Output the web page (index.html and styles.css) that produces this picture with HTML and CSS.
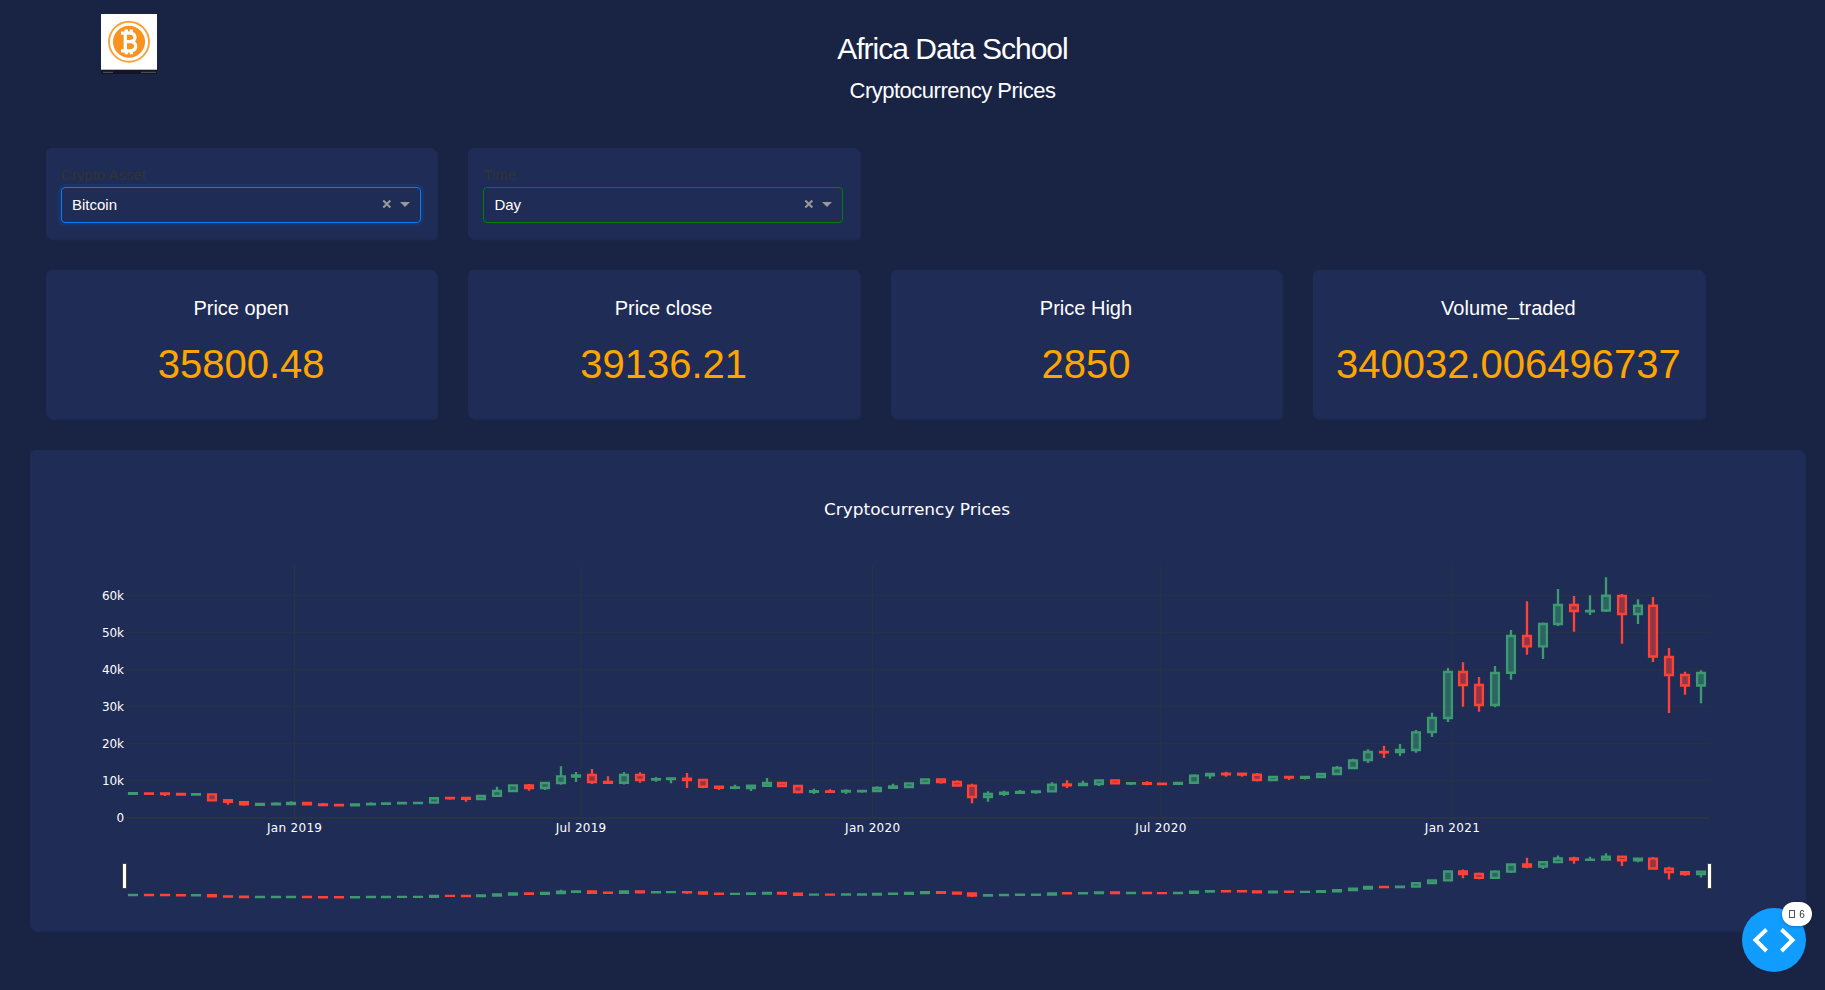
FILE: index.html
```html
<!DOCTYPE html>
<html lang="en">
<head>
<meta charset="utf-8">
<title>Cryptocurrency Prices</title>
<link rel="stylesheet" href="styles.css">
</head>
<body>
<header class="header">
  <svg class="logo" width="56" height="60" viewBox="0 0 56 60">
    <rect width="56" height="56" fill="#fff"/>
    <rect y="55" width="56" height="1" fill="#bbb"/>
    <rect y="56" width="56" height="4" fill="#12142a"/>
    <path d="M2 58.3h10M40 58.3h15" stroke="#5d5a5c" stroke-width="1"/>
    <circle cx="28" cy="27.7" r="20" fill="none" stroke="#f9a13a" stroke-width="1.9"/>
    <circle cx="28" cy="27.7" r="16" fill="#f7931e"/>
    <path d="M20 19.200h8.500c7 0 7 7.600 1.500 8.300c6.500 .8 6.500 9.400-1.500 9.400H20M24.300 19.200v17.700M24 27.700h6M25.300 15.500v4M30.300 15.500v4M25.300 36v4.300M30.300 36v4.300" fill="none" stroke="#fff" stroke-width="3.300"/>
  </svg>
  <div class="titles">
    <h3 class="title">Africa Data School</h3>
    <h5 class="subtitle">Cryptocurrency Prices</h5>
  </div>
</header>
<main>
  <section class="row">
    <div class="card filter">
      <label class="label">Crypto Asset</label>
      <div class="select focused"><span class="value">Bitcoin</span>
        <svg class="controls" width="28" height="10" viewBox="0 0 28 10"><path d="M1.300 1.500l7 7M8.300 1.500l-7 7" stroke="#999" stroke-width="2"/><path d="M18 3h10l-5 5z" fill="#999"/></svg>
      </div>
    </div>
    <div class="card filter">
      <label class="label">Time</label>
      <div class="select"><span class="value">Day</span>
        <svg class="controls" width="28" height="10" viewBox="0 0 28 10"><path d="M1.300 1.500l7 7M8.300 1.500l-7 7" stroke="#999" stroke-width="2"/><path d="M18 3h10l-5 5z" fill="#999"/></svg>
      </div>
    </div>
  </section>
  <section class="row stats">
    <div class="card stat"><h6 class="stat-name">Price open</h6><p class="stat-value">35800.48</p></div>
    <div class="card stat"><h6 class="stat-name">Price close</h6><p class="stat-value">39136.21</p></div>
    <div class="card stat"><h6 class="stat-name">Price High</h6><p class="stat-value">2850</p></div>
    <div class="card stat"><h6 class="stat-name">Volume_traded</h6><p class="stat-value">340032.006496737</p></div>
  </section>
  <section class="card chart-card">
    <svg id="chart" class="chart" width="1774" height="480" viewBox="30 450 1774 480"></svg>
  </section>
</main>
<div class="debug">
  <svg class="debug-icon" width="64" height="64" viewBox="0 0 64 64"><circle cx="32" cy="32" r="32" fill="#119dff"/><path d="M24.500 21.500L13.500 32l11 11M39.500 21.500L50.500 32l-11 11" fill="none" stroke="#fff" stroke-width="4"/></svg>
  <div class="badge"><i class="tofu"></i><span>6</span></div>
</div>
<script src="chart.js"></script>
</body>
</html>
```
FILE: styles.css
```css
* { box-sizing: border-box; }
body {
  margin: 0;
  height: 990px;
  overflow: hidden;
  background: #192444;
  color: #fff;
  font-family: "Liberation Sans", Arial, sans-serif;
  font-size: 15px;
}
h3, h5, h6, p { margin: 0; font-weight: 400; }
.header { display: flex; height: 148px; padding: 14px 0 0 101px; }
.logo { flex: none; }
.titles { width: 1591px; text-align: center; padding-top: 17px; }
.title { font-size: 30px; line-height: 36px; letter-spacing: -1px; }
.subtitle { font-size: 22px; line-height: 33px; letter-spacing: -.5px; margin-top: 7px; }
.row { display: flex; gap: 32px; padding-left: 46px; }
.card {
  background: #1f2c56;
  border-radius: 5px;
  box-shadow: 2px 2px 2px #1f2c56;
}
.filter { width: 390.400px; height: 90px; padding: 16px 15.400px 0 15px; }
.label { display: block; color: #333; line-height: 22px; height: 23px; }
.select {
  display: flex;
  align-items: center;
  justify-content: space-between;
  height: 36px;
  padding: 0 10px 2px;
  border: 1px solid green;
  border-radius: 4px;
}
.focused { border-color: #007eff; box-shadow: 0 0 0 3px rgba(0, 126, 255, .1); }
.stats { margin-top: 32px; }
.stat { width: 390.400px; height: 148px; padding-top: 23px; text-align: center; }
.stat-name { font-size: 20px; line-height: 30px; }
.stat-value { font-size: 40px; line-height: 60px; margin-top: 11px; color: orange; white-space: nowrap; }
.chart-card { margin: 32px 0 0 30px; width: 1774px; height: 480px; }
.chart { display: block; }
.chart text { font-family: "DejaVu Sans", Verdana, sans-serif; font-size: 12px; fill: #fff; }
.chart .chart-title { font-size: 16.500px; }
.grid { stroke: #283442; stroke-width: 1; }
.zero { stroke: #283442; stroke-width: 2; }
.up { stroke: #3d9970; fill: rgba(61, 153, 112, .5); stroke-width: 2.350; }
.down { stroke: #ff4136; fill: rgba(255, 65, 54, .5); stroke-width: 2.350; }
.handle { fill: #fff; stroke: #444; stroke-width: 1; }
.debug { position: fixed; left: 1742px; top: 908px; width: 64px; height: 64px; }
.debug-icon { display: block; }
.badge {
  position: absolute;
  left: 40px;
  top: -6px;
  width: 30px;
  height: 24px;
  border-radius: 12px;
  background: #fff;
  box-shadow: 0 1px 3px rgba(0, 0, 0, .25);
  color: #333;
  display: flex;
  align-items: center;
  justify-content: center;
  gap: 4px;
  font-size: 10px;
}
.tofu { width: 6px; height: 8px; border: 1px solid #555; }
```
FILE: chart.js
```js
// One row per ten-day candle: direction, high, body top, body bottom, low (chart units).
const candles = `
g 793 793.2 793.8 794
r 793 793.3 793.9 794
r 792.6 793.5 794.1 796
r 793.5 793.9 794.6 795
g 794 794.2 794.6 795
r 794 794.3 800.3 801
r 800 800.2 801.9 804.8
r 802 802.2 804.3 805.7
g 803.5 804 804.7 806
g 802.2 803.7 804.2 804.6
g 801.2 802.9 804 804.5
r 802.6 803 804.2 804.6
r 803 804.3 805.1 805.5
r 804.6 805 805.4 806
g 804.2 804.5 805.4 806
g 802.2 803.8 804.4 804.8
g 803 803.4 803.9 804.4
g 802.6 803 803.3 803.7
g 802.4 802.8 803 803.4
g 797.4 798.2 802.6 803
r 797.6 798 798.3 799.7
r 797 798 798.9 801.8
g 795.5 796 799 799.6
g 786.7 791 795.8 796
g 784.6 785.3 791 791.5
r 784 785.5 788 790.7
g 782.4 783 788 790
g 766.3 776.4 783 784.8
g 772 775.5 776.5 782
r 769 775 782 784
r 776.3 782 782.8 783.4
g 772 775 782.7 784.5
r 772.3 775 780 782.7
g 777 779.2 779.6 781.7
g 777.3 778.5 779 783.3
r 773 778.6 780 788
r 779.5 780 786.7 788.3
r 786 786.6 787.7 790
g 784.7 787.3 787.7 789.3
g 785 785.6 788 791
g 778 783 785.7 786.3
r 782.5 783 786 786.6
r 785.5 786 792 793.6
g 788.7 791.2 791.8 794
r 789.3 791.3 791.8 792.4
g 789.3 791 791.6 794
g 790.3 790.8 791.2 792.7
g 786.3 788 791 791.5
g 783.7 786.4 787.8 788.3
g 782.8 783.3 787 787.4
g 778.6 779.3 783 783.6
r 778.8 779.3 782 783.7
r 780.3 782 785.5 786.8
r 783.7 785.7 797 803.3
g 791.3 794 797 801.7
g 790.7 792.7 793.8 796
g 790 792 792.7 793
g 790.8 791.3 792 793.7
g 782.3 784.7 791.3 792
r 780.3 784.3 785.2 788
g 780.7 784 785 785.5
g 779.6 780.3 784 786
r 779.8 780.3 783.3 783.8
g 782 783.2 783.6 785
r 781.3 783.2 783.8 785.3
r 783.2 783.7 784 785
g 782.5 783 783.7 784.2
g 774.3 775.7 782.7 783.2
g 773 773.8 775.3 778.7
r 771.7 773.7 774.3 776.7
r 773.2 773.7 774.5 776.7
r 773 774.7 780 781.6
g 776.2 776.8 780 780.6
r 776.3 776.8 777.6 780
g 776.5 777 777.7 779.5
g 773.5 774 777 777.6
g 766 768 774 774.6
g 758.7 760.5 768 769.3
g 749.3 752 760 763
r 745.7 752 752.2 758
g 744 750 752 756
g 730 732.3 750 752.7
g 712.7 718 732 737
g 668 672 718 722
r 662.3 672 685 706.7
r 677 685 705 711.7
g 666 673 705 707.3
g 630 636 672.7 679.7
r 601.3 636 646.3 654.7
g 622.6 624 646.3 659
g 589 605 624 626
r 596 605 611 631.7
g 595.3 611 611.4 615
g 577.3 595.7 610.5 612
r 594 596 614 643.7
g 599.3 605.7 614 624
r 597 605.7 656.5 662
r 648 657 675 713
r 671.7 675 685.5 694.7
g 670.3 673 685.5 703.3`.trim().split('\n').map(l => l.split(' '));

const X0 = 133, STEP = 15.838, HALF = 3.9;
let out = '';
const months = [[294.5, 'Jan 2019', 55], [581, 'Jul 2019', 50.5], [872.6, 'Jan 2020', 55], [1160.8, 'Jul 2020', 51], [1452.3, 'Jan 2021', 55]];
for (const [x] of months) out += `<path class="grid" d="M${x} 565V818"/>`;
for (let k = 1; k <= 6; k++) out += `<path class="grid" d="M125 ${817.8 - k * 37}H1709"/>`;
out += '<path class="zero" d="M125 818H1709"/>';

function draw(map) {
  candles.forEach(([dir, h, t, b, l], i) => {
    const x = Math.round(X0 + i * STEP);
    const [H, T, B, L] = [h, t, b, l].map(v => map(+v).toFixed(2));
    out += `<path class="${dir === 'g' ? 'up' : 'down'}" d="M${x - HALF} ${T}H${x + HALF}V${B}H${x - HALF}ZM${x} ${T}V${H}M${x} ${B}V${L}"/>`;
  });
}
draw(v => v);
draw(v => 895 + (v - 793.5) * 0.1936);

for (const [x, label, w] of months)
  out += `<text x="${x - w / 2}" y="832" textLength="${w}">${label}</text>`;
for (let k = 0; k <= 6; k++) {
  const w = k ? 22 : 7.5;
  out += `<text x="${124 - w}" y="${822 - k * 37}" textLength="${w}">${k ? k + '0k' : '0'}</text>`;
}
out += '<text class="chart-title" x="824" y="515" textLength="186" lengthAdjust="spacingAndGlyphs">Cryptocurrency Prices</text>';
out += '<rect class="handle" x="122.500" y="863.500" width="4" height="25"/><rect class="handle" x="1707.500" y="863.500" width="4" height="25"/>';
document.getElementById('chart').innerHTML = out;
```
